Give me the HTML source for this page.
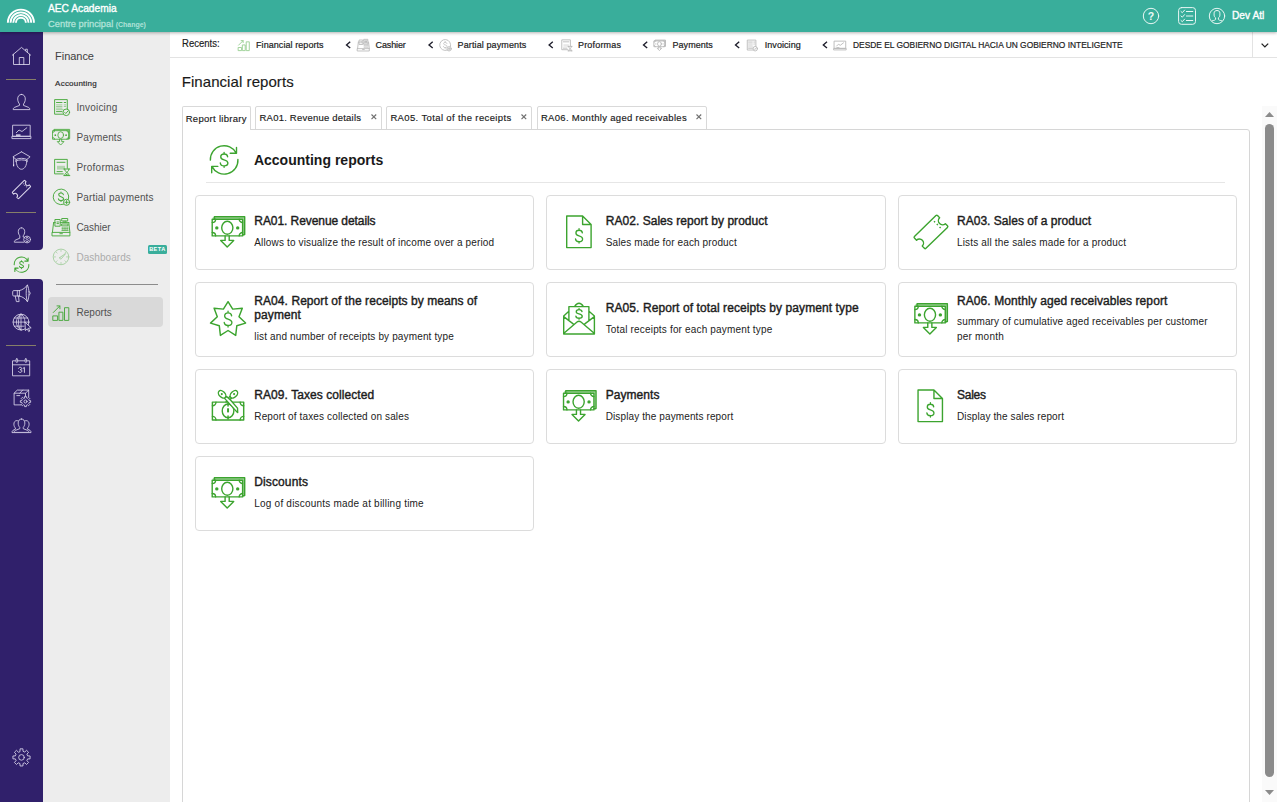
<!DOCTYPE html>
<html>
<head>
<meta charset="utf-8">
<title>Financial reports</title>
<style>
*{box-sizing:border-box;margin:0;padding:0}
html,body{width:1277px;height:802px;overflow:hidden;background:#fff}
body{font-family:"Liberation Sans",sans-serif;color:#222;position:relative;font-size:10px}
.a{position:absolute}
.t{position:absolute;white-space:nowrap;line-height:1;z-index:9}
svg{position:absolute;overflow:visible;z-index:8}
#hdr{left:0;top:0;width:1277px;height:32px;background:#39ae9b;z-index:5;box-shadow:0 1px 3px rgba(0,0,0,.3)}
#side{left:0;top:32px;width:43px;height:770px;background:#30206b}
#panel{left:43px;top:32px;width:127px;height:770px;background:#ededed}
.sep{position:absolute;left:6px;width:30px;height:1px;background:#867f68}
#rec{left:170px;top:32px;width:1107px;height:26px;background:#fff;border-bottom:1px solid #e3e3e3}
.tab{position:absolute;top:106px;height:24px;border:1px solid #d9d9d9;background:#fff;border-radius:2px 2px 0 0}
#main{left:182px;top:129px;width:1068px;height:700px;border:1px solid #d6d6d6;border-radius:0 3px 0 0}
.card{position:absolute;width:339.33px;height:75px;border:1px solid #dcdcdc;border-radius:4px;background:#fff}
.g{stroke:#3ca42f;fill:none;stroke-width:1.25;stroke-linejoin:round;stroke-linecap:round}
.gf{fill:#3ca42f;stroke:none}
.w{stroke:#dcd7ec;fill:none;stroke-width:.85;stroke-linejoin:round;stroke-linecap:round}
.k{stroke:#b9b9b9;fill:none;stroke-width:.9;stroke-linejoin:round;stroke-linecap:round}
</style>
</head>
<body>
<div id="hdr" class="a"></div>
<div id="side" class="a"></div>
<div id="panel" class="a"></div>
<div id="rec" class="a"></div>
<!-- sidebar separators -->
<div class="sep" style="top:79px"></div>
<div class="sep" style="top:212px"></div>
<div class="sep" style="top:345px"></div>
<!-- sidebar active item -->
<div class="a" style="left:0;top:246px;width:43px;height:36px;background:#ededed"></div>
<div class="a" style="left:0;top:240px;width:43px;height:10px;background:#30206b;border-radius:0 0 4px 0"></div>
<div class="a" style="left:0;top:279px;width:43px;height:10px;background:#30206b;border-radius:0 4px 0 0"></div>
<!-- panel decorations -->
<div class="a" style="left:148px;top:245px;width:19px;height:9px;background:#39ae9b;border-radius:1.5px"></div>
<div class="a" style="left:56px;top:284px;width:102px;height:1px;background:#8c8c8c"></div>
<div class="a" style="left:48px;top:297px;width:115px;height:30px;background:#d9d9d9;border-radius:4px"></div>
<!-- recents divider + chevron -->
<div class="a" style="left:1252px;top:32px;width:1px;height:25px;background:#e3e3e3"></div>
<svg style="left:1261px;top:42.5px" width="8" height="5"><path d="M0.6 0.6L3.9 3.9L7.2 0.6" fill="none" stroke="#222" stroke-width="1.3"/></svg>

<svg class="a" style="left:0;top:0;z-index:8" width="1277" height="802" viewBox="0 0 1277 802">
<defs>
 <!-- dollar sign centered at 0,0  (8.6w x 15.8h) -->
 <g id="dol"><path d="M3.52-3.01C3.34-4.7 1.94-5.83 0-5.83C-2.02-5.83-3.34-4.61-3.34-2.91C-3.34-1.22-2.11-0.47 0 0.09C2.29 0.75 3.78 1.5 3.78 3.29C3.78 4.98 2.2 6.11 0 6.11C-2.2 6.11-3.61 4.98-3.78 3.2M0-7.33V-5.83M0 6.11V7.52"/></g>
 <!-- circular arrows with dollar, centered 0,0 r=13.7 -->
 <g id="fin"><path d="M-13.7 .3A13.7 13.7 0 0 1 12.2 -6.6M12.4 -12.3V-6.5H6.1M13.8 -.3A13.7 13.7 0 0 1 -12.2 6.6M-12.4 12.9V6.6H-6.3"/><use href="#dol"/></g>
 <!-- money stack with arrow, origin top-left, 36x34 -->
 <g id="money">
  <path d="M4.4 4.2V1.7H34.7V19.6H32.6"/><path d="M3.3 2.95H33.65V20.3" opacity=".5"/>
  <rect x="2.2" y="4.2" width="30.4" height="16.7"/>
  <ellipse cx="17.3" cy="12.8" rx="5.6" ry="6.5"/>
  <path d="M2.2 7.6A3.4 3.4 0 0 0 5.6 4.2M29.2 4.2A3.4 3.4 0 0 0 32.6 7.6M32.6 17.5A3.4 3.4 0 0 0 29.2 20.9M5.6 20.9A3.4 3.4 0 0 0 2.2 17.5"/>
  <circle cx="6.8" cy="12.9" r="1.7" fill="currentColor" stroke="none"/><circle cx="27.7" cy="12.9" r="1.7" fill="currentColor" stroke="none"/>
  <path d="M15.1 20.9V25.4H10.7L17.2 32.1L23.7 25.4H19.2V20.9"/>
 </g>
 <!-- document with dollar, origin top-left 24.4x31.6 -->
 <g id="docd"><path d="M0 0H15.9L24.4 8.5V31.6H0ZM15.9 0V8.5H24.4"/><use href="#dol" transform="translate(12.35 19.8) scale(.94 .96)"/></g>
 <!-- ticket centered, unrotated, 32.2 x 16.5 -->
 <g id="tick"><path d="M-15 -8.25H15A1.1 1.1 0 0 1 16.1 -7.15V-4.1A4.1 4.1 0 0 0 16.1 4.1V7.15A1.1 1.1 0 0 1 15 8.25H-15A1.1 1.1 0 0 1 -16.1 7.15V4.1A4.1 4.1 0 0 0 -16.1 -4.1V-7.15A1.1 1.1 0 0 1 -15 -8.25Z"/><path d="M9.7 -5.6V6.4" stroke-dasharray="1.5 2.5" stroke-linecap="butt"/></g>
 <!-- panel: invoicing 18x18 -->
 <g id="inv"><path d="M11 16.2H2.6V1.6H15.3V11"/><path d="M4.5 4.5H10M12.2 4.5H13.7M4.5 13.6H10"/><path d="M4.5 6.9H10M4.5 8.5H10M4.5 10.1H10M12.2 6.9H13.7M12.2 8.5H13.7M4.5 11.7H11" opacity=".5"/><circle cx="14.3" cy="14.3" r="3.3"/><path d="M12.7 14.4L13.8 15.5L16 12.9"/></g>
 <!-- panel: proformas -->
 <g id="pro"><path d="M11.3 15.9H2.6V1.4H15.3V10.3"/><path d="M5 4.3H13M5 13.6H10.3"/><rect x="5" y="7.8" width="8" height="3.8" fill="currentColor" stroke="none" opacity=".35"/><path d="M11.8 11H17.8M11.8 17.6H17.8M12.7 11C12.7 13.4 14.2 13.7 14.8 14.3C15.4 13.7 16.9 13.4 16.9 11M12.7 17.6C12.7 15.2 14.2 14.9 14.8 14.3C15.4 14.9 16.9 15.2 16.9 17.6"/><path d="M13.4 17.4L14.8 15.6L16.2 17.4Z" fill="currentColor" stroke="none"/></g>
 <!-- panel: partial payments -->
 <g id="par"><path d="M11.54 16.27A7.8 7.8 0 1 1 16.46 11.18"/><use href="#dol" transform="translate(9 8.7) scale(.68 .64)" stroke-width="1.6"/><circle cx="14.6" cy="14.3" r="3.1"/><path d="M14.6 12.6V16M12.9 14.3H16.3"/></g>
 <!-- panel: cashier -->
 <g id="cas"><rect x=".4" y="14.4" width="17.5" height="3.5"/><path d="M7.9 15.7H10.4"/><path d="M1.6 4.6L.4 14.4M16.8 4.6L17.9 14.4M1.6 4.6H3.3M8.2 4.6H16.8"/><rect x="3.3" y="1.5" width="4.9" height="6.7"/><path d="M5 4H6.5M5 5.6H6.5"/><rect x="10.1" y=".5" width="5.6" height="2.5"/><path d="M12 3V4.6M13.8 3V4.6"/><rect x="10" y="6" width="6" height="1.9"/><path d="M10.1 10.1H11.3M12.4 10.1H13.6M14.7 10.1H15.9M10.1 12.2H11.3M12.4 12.2H13.6M14.7 12.2H15.9" stroke-width="1.3"/></g>
 <!-- panel: dashboards -->
 <g id="das"><circle cx="9" cy="8.9" r="7.8"/><path d="M9 2.2V3.4M9 14.4V15.6M2.3 8.9H3.5M14.5 8.9H15.7M4.3 4.2L5.1 5M13.7 4.2L12.9 5M4.3 13.6L5.1 12.8M13.7 13.6L12.9 12.8" opacity=".8"/><path d="M7.7 9.6L13.6 5.6L9.3 10.8C8.3 11.3 7.2 10.4 7.7 9.6Z"/></g>
 <!-- panel: reports -->
 <g id="rep"><rect x="1.2" y="12.9" width="4.4" height="4.5"/><rect x="7.3" y="9.2" width="3.6" height="8.2"/><rect x="12.9" y="4.7" width="3.9" height="12.7"/><path d="M1.3 9.5L7.7 3.1M5 2.9H7.9V5.8"/></g>
 <!-- sidebar: board (origin 12.3,125) -->
 <g id="brd"><rect x=".7" y=".2" width="17.2" height="11.1"/><rect x="0" y="11.3" width="18.6" height="2.3"/><path d="M4 7.7L6.7 5L9.7 6.5L14.5 2.8"/><rect x="3.7" y="9.4" width="4.5" height="1.4" fill="currentColor" stroke="none"/></g>
</defs>
<g fill="none" stroke="#fff" stroke-width="1.9">
<path d="M15.95 22.7A4.95 4.95 0 0 1 25.85 22.7"/>
<path d="M13.25 22.7A7.65 7.65 0 0 1 28.55 22.7"/>
<path d="M10.55 22.7A10.35 10.35 0 0 1 31.25 22.7"/>
<path d="M7.85 22.7A13.05 13.05 0 0 1 33.95 22.7"/>
</g>
<g fill="none" stroke="#e9f7f4" stroke-width="1" stroke-linecap="round" stroke-linejoin="round">
<circle cx="1151" cy="16" r="7.7"/>
<rect x="1178.6" y="7.6" width="16.9" height="16.7" rx="2.8"/>
<path d="M1181 11.5L1182.3 12.7L1184.6 10.1M1186.4 11.5H1192.8"/>
<path d="M1181 16L1182.3 17.2L1184.6 14.6M1186.4 16H1192.8"/>
<path d="M1181 20.5L1182.3 21.7L1184.6 19.1M1186.4 20.5H1192.8"/>
<circle cx="1217" cy="16" r="7.7"/>
<path d="M1217 10.5C1219 10.5 1219.9 11.6 1219.9 13.1V15C1219.9 16.3 1219.3 17.2 1218.4 17.9V19.2C1218.4 19.9 1219.2 20.2 1220.2 20.4L1221.9 20.9M1217 10.5C1215 10.5 1214.1 11.6 1214.1 13.1V15C1214.1 16.3 1214.7 17.2 1215.6 17.9V19.2C1215.6 19.9 1214.8 20.2 1213.8 20.4L1212.1 20.9"/>
</g>
<text x="1151" y="19.9" font-family="Liberation Sans, sans-serif" font-size="10.5" font-weight="bold" fill="#eefaf7" text-anchor="middle">?</text>
<g class="w" style="color:#e4e0f0">
<path d="M12.3 55.2L21.5 47.4L30.7 55.2M13.5 54.3V64.5H29.5V54.3M19.3 64.5V57.5H23.8V64.5M25.6 50.6V49.2H27.3V52.2"/>
<path d="M21.50 94.40C24.00 94.40 25.30 96.40 25.30 99.00C25.30 101.40 24.30 103.00 23.50 104.00V105.40L28.50 107.40C29.50 107.90 29.80 108.70 29.80 109.60H13.20C13.20 108.70 13.50 107.90 14.50 107.40L19.50 105.40V104.00C18.70 103.00 17.70 101.40 17.70 99.00C17.70 96.40 19.00 94.40 21.50 94.40Z"/>
<use href="#brd" x="12.3" y="125"/>
<path d="M21.5 151.8L30.1 156.8L26.9 159.4M16.1 159.4L12.9 156.8L21.5 151.8M13.6 157.4V164.6"/>
<path d="M15.9 161.2V159.6C18 157.9 25 157.9 27.1 159.6V161.2M15.9 161C18 159.4 25 159.4 27.1 161"/>
<path d="M16.2 161.2C16.2 164.5 17.6 167.3 19.3 168.5C20.5 169.5 22.5 169.5 23.7 168.5C25.4 167.3 26.8 164.5 26.8 161.2"/>
<rect x="13" y="164.4" width="1.2" height="1.9" fill="currentColor" stroke="none"/>
<use href="#tick" transform="translate(21.45 189.5) rotate(-45) scale(.545)" stroke-width="1.85"/>
<path d="M21.5 227.8C23.6 227.8 24.7 229.5 24.7 231.6C24.7 233.6 23.9 235 23.2 235.8V237C23.6 237.2 24 237.4 24.3 237.5M23.8 242.2H14.3C14.3 241.3 14.6 240.5 15.5 240.1L19.8 238.2V235.8C19.1 235 18.3 233.6 18.3 231.6C18.3 229.5 19.4 227.8 21.5 227.8"/>
<circle cx="27.1" cy="239.5" r="3.4"/>
<use href="#dol" transform="translate(27.1 239.5) scale(.36 .33)" stroke-width="2.2"/>
<path d="M19.4 290.6H13.8C13 290.6 12.7 291 12.7 291.8V294.8C12.7 295.6 13 296 13.8 296H19.4M19.4 290.6V296M17.3 290.6V296M19.4 290.6C23 289.8 25.6 287.6 27.4 285C28.4 287 29 290 29 293.3C29 296.6 28.4 299.6 27.4 301.6C25.6 299 23 296.8 19.4 296M27.4 285C26.6 287 26.2 290 26.2 293.3C26.2 296.6 26.6 299.6 27.4 301.6M29 291.6C30 291.8 30.2 292.6 30.2 293.3C30.2 294 30 294.8 29 295M15.2 296L16.4 301.6H19.1L18.5 296"/>
<circle cx="21" cy="322.1" r="7.9"/>
<path d="M21 314.2V330M13.1 322.1H28.9M14.3 318H27.7M14.3 326.2H24M21 314.2C17.5 316.5 17.5 327.7 21 330M21 314.2C24.5 316.5 25 320 24.8 322.5M21 314.2C14.8 317 14.8 327.2 21 330" stroke-width=".8"/>
<path d="M25 322.6L25.4 330.6L27.3 328.8L28.7 331.6L29.8 331L28.4 328.3L30.8 327.9Z" fill="#30206b"/>
<rect x="12.9" y="360.8" width="16.8" height="15"/><path d="M12.9 364.8H29.7"/><rect x="16.1" y="358.8" width="1.5" height="3.6" rx=".7" fill="#30206b"/><rect x="25.1" y="358.8" width="1.5" height="3.6" rx=".7" fill="#30206b"/>
<path d="M21.2 404.9H14.1V393.2H25.5V395.8M14.1 393.2L17.3 390.1H28.7L25.5 393.2M28.7 390.1V396.6M22.6 390.1L19.8 393.2M16.8 395.6H19.8"/>
<path d="M24.58 397.81L24.65 396.37L26.35 396.37L26.42 397.81L27.46 398.24L28.52 397.27L29.73 398.48L28.76 399.54L29.19 400.58L30.63 400.65L30.63 402.35L29.19 402.42L28.76 403.46L29.73 404.52L28.52 405.73L27.46 404.76L26.42 405.19L26.35 406.63L24.65 406.63L24.58 405.19L23.54 404.76L22.48 405.73L21.27 404.52L22.24 403.46L21.81 402.42L20.37 402.35L20.37 400.65L21.81 400.58L22.24 399.54L21.27 398.48L22.48 397.27L23.54 398.24Z"/><circle cx="25.5" cy="401.5" r="1.5"/>
<path d="M19.2 421.7C18.6 421 17.8 420.6 16.9 420.6C14.9 420.6 13.9 422.2 13.9 424.2C13.9 426 14.7 427.3 15.4 428V429.2L12.9 430.4C12.2 430.8 12 431.6 12 432.6H31C31 431.6 30.8 430.8 30.1 430.4L27.6 429.2V428C28.3 427.3 29.1 426 29.1 424.2C29.1 422.2 28.1 420.6 26.1 420.6C25.2 420.6 24.4 421 23.8 421.7"/>
<path d="M21.50 419.00C23.70 419.00 24.84 420.76 24.84 423.05C24.84 425.16 23.96 426.57 23.26 427.45V428.68L27.66 430.44C28.54 430.88 28.80 431.58 28.80 432.38H14.20C14.20 431.58 14.46 430.88 15.34 430.44L19.74 428.68V427.45C19.04 426.57 18.16 425.16 18.16 423.05C18.16 420.76 19.30 419.00 21.50 419.00Z" fill="#30206b"/>
<path d="M19.98 751.29L20.07 748.82L22.93 748.82L23.02 751.29L24.75 752.00L26.56 750.32L28.58 752.34L26.90 754.15L27.61 755.88L30.08 755.97L30.08 758.83L27.61 758.92L26.90 760.65L28.58 762.46L26.56 764.48L24.75 762.80L23.02 763.51L22.93 765.98L20.07 765.98L19.98 763.51L18.25 762.80L16.44 764.48L14.42 762.46L16.10 760.65L15.39 758.92L12.92 758.83L12.92 755.97L15.39 755.88L16.10 754.15L14.42 752.34L16.44 750.32L18.25 752.00Z"/><circle cx="21.5" cy="757.4" r="2.8"/>
</g>
<path class="w" style="stroke-width:.85;stroke:#efecf7" d="M18.6 368.2C18.9 367.6 19.5 367.3 20.2 367.3C21.1 367.3 21.7 367.8 21.7 368.5C21.7 369.3 21.1 369.7 20.2 369.7C21.2 369.7 21.9 370.2 21.9 371C21.9 371.9 21.2 372.4 20.2 372.4C19.4 372.4 18.8 372 18.5 371.4M23.1 368.4L24.4 367.4V372.4"/>
<use href="#fin" class="g" transform="translate(21.5 264.6) scale(.535)" style="stroke-width:1.95"/>
<g class="g" style="color:#3ca42f;stroke-width:.95" opacity=".92">
<use href="#inv" x="52" y="98"/>
<use href="#money" transform="translate(51.8 128.5) scale(.515)" stroke-width="1.65"/>
<use href="#pro" x="52" y="158"/>
<use href="#par" x="52" y="188"/>
<use href="#cas" x="52" y="218"/>
<use href="#das" x="52" y="248" opacity=".42"/>
<use href="#rep" x="52" y="303"/>
</g>
<g class="g" style="color:#3ca42f" opacity=".5"><use href="#rep" transform="translate(237.7 38.6) scale(.69)" stroke-width="1.35"/></g>
<g class="k" style="color:#bdbdbd">
<use href="#cas" transform="translate(357.3 39) scale(.67)" stroke-width="1.3"/>
<use href="#par" transform="translate(438.9 38.8) scale(.7)" stroke-width="1.25"/>
<use href="#pro" transform="translate(560 38.9) scale(.68)" stroke-width="1.3"/>
<use href="#money" transform="translate(653.5 39.5) scale(.345)" stroke-width="2.6"/>
<use href="#inv" transform="translate(745.5 39) scale(.68)" stroke-width="1.3"/>
<use href="#brd" transform="translate(834 41) scale(.655)" stroke-width="1.4"/>
</g>
<path d="M350.2 41.7L346.5 44.9L350.2 48.1" fill="none" stroke="#1d1d2b" stroke-width="1.35"/>
<path d="M432.7 41.7L429.0 44.9L432.7 48.1" fill="none" stroke="#1d1d2b" stroke-width="1.35"/>
<path d="M552.8 41.7L549.1 44.9L552.8 48.1" fill="none" stroke="#1d1d2b" stroke-width="1.35"/>
<path d="M647.2 41.7L643.5 44.9L647.2 48.1" fill="none" stroke="#1d1d2b" stroke-width="1.35"/>
<path d="M739.2 41.7L735.5 44.9L739.2 48.1" fill="none" stroke="#1d1d2b" stroke-width="1.35"/>
<path d="M827.0 41.7L823.3 44.9L827.0 48.1" fill="none" stroke="#1d1d2b" stroke-width="1.35"/>
<g class="g" style="color:#3ca42f;stroke-width:1.4">
<use href="#fin" x="224.1" y="159.8"/>
<use href="#money" x="210.00" y="215"/>
<use href="#money" x="912.67" y="302"/>
<use href="#money" x="561.33" y="389"/>
<use href="#money" x="210.00" y="476"/>
<use href="#docd" x="566.7" y="216"/>
<use href="#docd" x="918.05" y="390"/>
<use href="#tick" transform="translate(930.95 231.95) rotate(-44.2)"/>
<path d="M228.05 301.7L232.7 309.1L242.3 308.25L239 316.8L245.6 323.1L236.8 325.8L235.7 335.4L228.05 330.5L220.4 335.4L219.3 325.8L210.5 323.1L217.3 316.8L214.1 308.25L223.4 309.1Z" stroke-width="1.45"/>
<use href="#dol" transform="translate(228.05 319) scale(1.02 1.06)" stroke-width="1.3"/>
<path d="M563.7 315.9V334H594.4V315.9M563.7 315.9L568.6 311.4M594.4 315.9L589.3 311.4M568.9 320.4V306.6H588.9V320.4M574.6 306.6C576 304.2 577.6 303.3 579 303.3C580.4 303.3 582 304.2 583.4 306.6M563.7 316.6L573.2 323.9M594.4 316.6L584.8 323.9M563.9 333.2L577 322C578.2 321 579.8 321 581 322L594.2 333.2"/>
<use href="#dol" transform="translate(579.05 313.8) scale(.84 .72)" stroke-width="1.6"/>
<rect x="212.4" y="402.1" width="31.3" height="17.85" stroke-width="1.45"/>
<path d="M212.4 405.7A3.6 3.6 0 0 0 216 402.1M240.1 402.1A3.6 3.6 0 0 0 243.7 405.7M243.7 416.35A3.6 3.6 0 0 0 240.1 419.95M216 419.95A3.6 3.6 0 0 0 212.4 416.35"/>
<ellipse cx="228.05" cy="410.9" rx="5.8" ry="6.9"/>
<path d="M228.05 403.2V406M228.05 416V419" stroke-width="1.5"/><path d="M228.05 408.3V412.4" stroke-width="2" stroke-linecap="butt"/>
<ellipse cx="233.9" cy="394.3" rx="4.4" ry="2.9" transform="rotate(-45 233.9 394.3)"/>
<path d="M231.4 398.3L226 401.8M229.6 396.6L227.6 399.4"/>
<path d="M224.6 398.2L226.2 400.1L236.6 411.6L237.7 412.5L237.5 408.1L230.7 400.3L226.6 396.4Z" fill="#fff"/>
<ellipse cx="222.1" cy="394.3" rx="4.4" ry="2.9" transform="rotate(45 222.1 394.3)" fill="#fff"/>
<circle cx="221.8" cy="394.1" r="1.05" fill="currentColor" stroke="none"/><circle cx="234.1" cy="394.1" r="1.05" fill="currentColor" stroke="none"/>
</g>
</svg>



<div class="tab" style="left:255px;width:127px"></div>
<div class="tab" style="left:386px;width:146px"></div>
<div class="tab" style="left:537px;width:170px"></div>
<div class="tab" style="left:182px;width:69px;height:24px;border-bottom:none;z-index:7"></div>
<svg style="left:371px;top:114px" width="6" height="6"><path d="M.5 .5L5.2 5.2M5.2 .5L.5 5.2" fill="none" stroke="#707070" stroke-width="1.15"/></svg>
<svg style="left:520.7px;top:114px" width="6" height="6"><path d="M.5 .5L5.2 5.2M5.2 .5L.5 5.2" fill="none" stroke="#707070" stroke-width="1.15"/></svg>
<svg style="left:696.2px;top:114px" width="6" height="6"><path d="M.5 .5L5.2 5.2M5.2 .5L.5 5.2" fill="none" stroke="#707070" stroke-width="1.15"/></svg>

<div id="main" class="a"></div>
<div class="a" style="left:206px;top:182px;width:1019px;height:1px;background:#e6e6e6;z-index:7"></div>
<div class="card" style="left:195px;top:195px;z-index:7"></div>
<div class="card" style="left:546.33px;top:195px;z-index:7"></div>
<div class="card" style="left:897.67px;top:195px;z-index:7"></div>
<div class="card" style="left:195px;top:282px;z-index:7"></div>
<div class="card" style="left:546.33px;top:282px;z-index:7"></div>
<div class="card" style="left:897.67px;top:282px;z-index:7"></div>
<div class="card" style="left:195px;top:369px;z-index:7"></div>
<div class="card" style="left:546.33px;top:369px;z-index:7"></div>
<div class="card" style="left:897.67px;top:369px;z-index:7"></div>
<div class="card" style="left:195px;top:456px;z-index:7"></div>
<span class="t" id="h1" style="left:48.10px;top:3.00px;font-size:10.5px;color:#ffffff;transform:scale(0.9727,1);transform-origin:0 0;-webkit-text-stroke:0.35px">AEC Academia</span>
<span class="t" id="h2" style="left:48.10px;top:20px;font-size:9.3px;color:#b0e2d8;letter-spacing:0.005px;-webkit-text-stroke:0.3px">Centre principal</span>
<span class="t" id="h3" style="left:115.80px;top:21px;font-size:7px;color:#b0e2d8;letter-spacing:-0.035px;font-weight:bold">(Change)</span>
<span class="t" id="h4" style="left:1232.30px;top:10.00px;font-size:10.5px;color:#ffffff;transform:scale(0.9710,1);transform-origin:0 0;-webkit-text-stroke:0.35px">Dev Atl</span>
<span class="t" id="p0" style="left:55.10px;top:51px;font-size:11px;color:#404040;letter-spacing:-0.040px">Finance</span>
<span class="t" id="p1" style="left:55.10px;top:80px;font-size:8px;color:#2e2e2e;letter-spacing:0.223px;-webkit-text-stroke:0.2px">Accounting</span>
<span class="t" id="p2" style="left:76.40px;top:103px;font-size:10px;color:#505050;letter-spacing:0.179px">Invoicing</span>
<span class="t" id="p3" style="left:76.40px;top:133px;font-size:10px;color:#505050;letter-spacing:0.133px">Payments</span>
<span class="t" id="p4" style="left:76.40px;top:163px;font-size:10px;color:#505050;letter-spacing:0.222px">Proformas</span>
<span class="t" id="p5" style="left:76.40px;top:193px;font-size:10px;color:#505050;letter-spacing:0.181px">Partial payments</span>
<span class="t" id="p6" style="left:76.40px;top:223px;font-size:10px;color:#505050;letter-spacing:-0.061px">Cashier</span>
<span class="t" id="p7" style="left:76.40px;top:253px;font-size:10px;color:#ababab;letter-spacing:0.053px">Dashboards</span>
<span class="t" id="p8" style="left:76.40px;top:308px;font-size:10px;color:#505050;letter-spacing:0.064px">Reports</span>
<span class="t" id="pb" style="left:149.20px;top:247px;font-size:5.6px;color:#ffffff;letter-spacing:0.396px;font-weight:bold">BETA</span>
<span class="t" id="r0" style="left:181.80px;top:39.00px;font-size:10px;color:#1a1a1a;transform:scale(0.9527,1);transform-origin:0 0;-webkit-text-stroke:0.15px">Recents:</span>
<span class="t" id="r1" style="left:256.00px;top:41px;font-size:9px;color:#222;letter-spacing:0.067px;-webkit-text-stroke:0.2px">Financial reports</span>
<span class="t" id="r2" style="left:375.50px;top:41px;font-size:9px;color:#222;letter-spacing:-0.119px;-webkit-text-stroke:0.2px">Cashier</span>
<span class="t" id="r3" style="left:457.60px;top:41px;font-size:9px;color:#222;letter-spacing:0.111px;-webkit-text-stroke:0.2px">Partial payments</span>
<span class="t" id="r4" style="left:578.00px;top:41px;font-size:9px;color:#222;letter-spacing:0.186px;-webkit-text-stroke:0.2px">Proformas</span>
<span class="t" id="r5" style="left:672.60px;top:41px;font-size:9px;color:#222;letter-spacing:0.010px;-webkit-text-stroke:0.2px">Payments</span>
<span class="t" id="r6" style="left:764.70px;top:41px;font-size:9px;color:#222;letter-spacing:0.071px;-webkit-text-stroke:0.2px">Invoicing</span>
<span class="t" id="r7" style="left:852.90px;top:41.00px;font-size:9px;color:#222;transform:scale(0.9325,1);transform-origin:0 0;-webkit-text-stroke:0.2px">DESDE EL GOBIERNO DIGITAL HACIA UN GOBIERNO INTELIGENTE</span>
<span class="t" id="title" style="left:181.70px;top:74px;font-size:15px;color:#1a1a1a;letter-spacing:0.069px;-webkit-text-stroke:0.15px">Financial reports</span>
<span class="t" id="t1" style="left:185.70px;top:114px;font-size:9.5px;color:#1a1a1a;letter-spacing:0.298px;-webkit-text-stroke:0.15px">Report library</span>
<span class="t" id="t2" style="left:259.50px;top:113px;font-size:9.5px;color:#1a1a1a;letter-spacing:0.216px;-webkit-text-stroke:0.15px">RA01. Revenue details</span>
<span class="t" id="t3" style="left:390.40px;top:113px;font-size:9.5px;color:#1a1a1a;letter-spacing:0.367px;-webkit-text-stroke:0.15px">RA05. Total of the receipts</span>
<span class="t" id="t4" style="left:540.90px;top:113px;font-size:9.5px;color:#1a1a1a;letter-spacing:0.311px;-webkit-text-stroke:0.15px">RA06. Monthly aged receivables</span>
<span class="t" id="sec" style="left:253.90px;top:153px;font-size:14px;color:#1a1a1a;letter-spacing:0.010px;font-weight:bold">Accounting reports</span>
<span class="t" id="c1t" style="left:254.30px;top:215px;font-size:12px;color:#1c1c1c;letter-spacing:-0.072px;-webkit-text-stroke:0.4px">RA01. Revenue details</span>
<span class="t" id="c1d" style="left:254.30px;top:238px;font-size:10px;color:#222222;letter-spacing:0.141px">Allows to visualize the result of income over a period</span>
<span class="t" id="c2t" style="left:605.70px;top:215px;font-size:12px;color:#1c1c1c;letter-spacing:0.044px;-webkit-text-stroke:0.4px">RA02. Sales report by product</span>
<span class="t" id="c2d" style="left:605.70px;top:238px;font-size:10px;color:#222222;letter-spacing:0.121px">Sales made for each product</span>
<span class="t" id="c3t" style="left:957.00px;top:215px;font-size:12px;color:#1c1c1c;letter-spacing:0.025px;-webkit-text-stroke:0.4px">RA03. Sales of a product</span>
<span class="t" id="c3d" style="left:957.00px;top:238px;font-size:10px;color:#222222;letter-spacing:0.166px">Lists all the sales made for a product</span>
<span class="t" id="c4t" style="left:254.30px;top:295px;font-size:12px;color:#1c1c1c;letter-spacing:0.069px;-webkit-text-stroke:0.4px">RA04. Report of the receipts by means of</span>
<span class="t" id="c4u" style="left:254.30px;top:309px;font-size:12px;color:#1c1c1c;letter-spacing:0.095px;-webkit-text-stroke:0.4px">payment</span>
<span class="t" id="c4d" style="left:254.30px;top:332px;font-size:10px;color:#222222;letter-spacing:0.144px">list and number of receipts by payment type</span>
<span class="t" id="c5t" style="left:605.70px;top:302px;font-size:12px;color:#1c1c1c;letter-spacing:0.091px;-webkit-text-stroke:0.4px">RA05. Report of total receipts by payment type</span>
<span class="t" id="c5d" style="left:605.70px;top:325px;font-size:10px;color:#222222;letter-spacing:0.170px">Total receipts for each payment type</span>
<span class="t" id="c6t" style="left:957.00px;top:295px;font-size:12px;color:#1c1c1c;letter-spacing:0.079px;-webkit-text-stroke:0.4px">RA06. Monthly aged receivables report</span>
<span class="t" id="c6d" style="left:957.00px;top:317px;font-size:10px;color:#222222;letter-spacing:0.167px">summary of cumulative aged receivables per customer</span>
<span class="t" id="c6e" style="left:957.00px;top:332px;font-size:10px;color:#222222;letter-spacing:0.209px">per month</span>
<span class="t" id="c7t" style="left:254.30px;top:389px;font-size:12px;color:#1c1c1c;letter-spacing:0.064px;-webkit-text-stroke:0.4px">RA09. Taxes collected</span>
<span class="t" id="c7d" style="left:254.30px;top:412px;font-size:10px;color:#222222;letter-spacing:0.137px">Report of taxes collected on sales</span>
<span class="t" id="c8t" style="left:605.70px;top:389px;font-size:12px;color:#1c1c1c;letter-spacing:0.063px;-webkit-text-stroke:0.4px">Payments</span>
<span class="t" id="c8d" style="left:605.70px;top:412px;font-size:10px;color:#222222;letter-spacing:0.115px">Display the payments report</span>
<span class="t" id="c9t" style="left:957.00px;top:389px;font-size:12px;color:#1c1c1c;letter-spacing:-0.258px;-webkit-text-stroke:0.4px">Sales</span>
<span class="t" id="c9d" style="left:957.00px;top:412px;font-size:10px;color:#222222;letter-spacing:0.109px">Display the sales report</span>
<span class="t" id="c10t" style="left:254.30px;top:476px;font-size:12px;color:#1c1c1c;letter-spacing:0.114px;-webkit-text-stroke:0.4px">Discounts</span>
<span class="t" id="c10d" style="left:254.30px;top:499px;font-size:10px;color:#222222;letter-spacing:0.212px">Log of discounts made at billing time</span>
<!-- scrollbar -->
<div class="a" style="left:1262px;top:106px;width:15px;height:696px;background:#fafafa"></div>
<div class="a" style="left:1265px;top:124px;width:9px;height:653px;background:#8b8b8b;border-radius:4.5px"></div>
<svg style="left:1265px;top:112px" width="9" height="5"><path d="M0 5L4.5 0L9 5Z" fill="#8b8b8b"/></svg>
<svg style="left:1265px;top:790px" width="9" height="5"><path d="M0 0L4.5 5L9 0Z" fill="#8b8b8b"/></svg>
</body>
</html>
